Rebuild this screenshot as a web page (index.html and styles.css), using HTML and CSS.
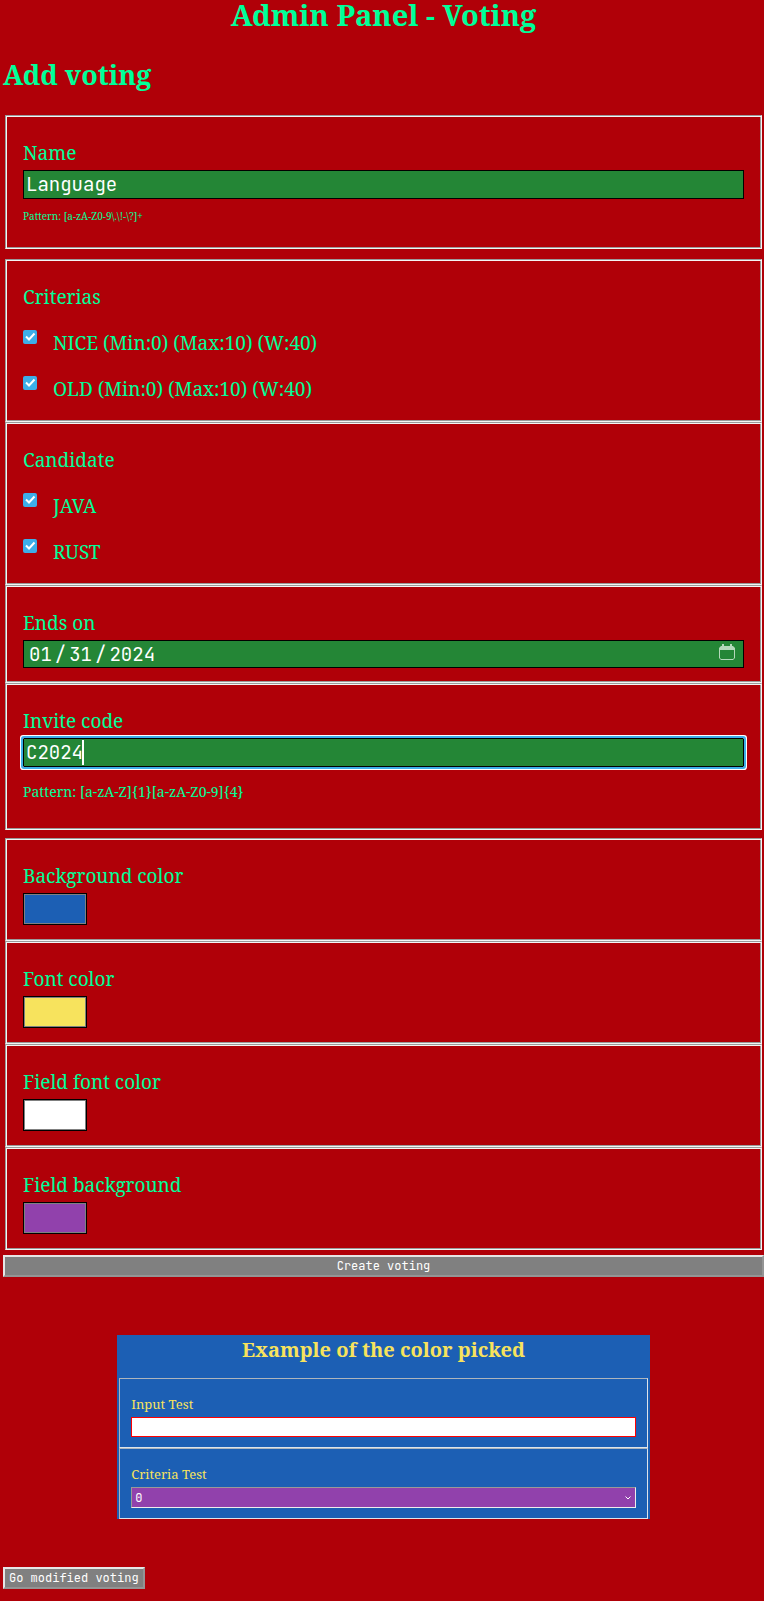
FILE: index.html
```html
<!DOCTYPE html>
<html lang="en">
<head>
<meta charset="utf-8">
<title>Admin Panel - Voting</title>
<meta name="viewport" content="width=device-width, initial-scale=1">
<link rel="stylesheet" href="styles.css">
</head>
<body>
<h1 class="title">Admin Panel - Voting</h1>
<main>
<h2 class="subtitle">Add voting</h2>
<form class="form">
  <div class="group">
    <fieldset class="box">
      <label class="label" for="name">Name</label>
      <input class="field" id="name" type="text" value="Language">
      <p class="hint hint-small">Pattern: [a-zA-Z0-9\.\!-\?]+</p>
    </fieldset>
  </div>
  <div class="group">
    <fieldset class="box">
      <span class="label">Criterias</span>
      <div class="option"><input class="check" type="checkbox" id="nice" checked><label for="nice">NICE (Min:0) (Max:10) (W:40)</label></div>
      <div class="option"><input class="check" type="checkbox" id="old" checked><label for="old">OLD (Min:0) (Max:10) (W:40)</label></div>
    </fieldset>
    <fieldset class="box">
      <span class="label">Candidate</span>
      <div class="option"><input class="check" type="checkbox" id="java" checked><label for="java">JAVA</label></div>
      <div class="option"><input class="check" type="checkbox" id="rust" checked><label for="rust">RUST</label></div>
    </fieldset>
    <fieldset class="box">
      <label class="label" for="ends">Ends on</label>
      <div class="wrap">
        <input class="field field-date" id="ends" type="date" value="2024-01-31">
        <svg class="calendar" viewBox="0 0 16 16" aria-hidden="true"><path d="M3 0h2v2h6V0h2v2h1l2 2v10l-2 2H2l-2-2V4l2-2h1zM1 6v8l1 1h12l1-1V6z" fill-rule="evenodd"/></svg>
      </div>
    </fieldset>
    <fieldset class="box">
      <label class="label" for="code">Invite code</label>
      <div class="wrap">
        <input class="field field-active" id="code" type="text" value="C2024">
        <span class="caret"></span>
      </div>
      <p class="hint">Pattern: [a-zA-Z]{1}[a-zA-Z0-9]{4}</p>
    </fieldset>
  </div>
  <div class="group">
    <fieldset class="box box-color">
      <label class="label" for="bg">Background color</label>
      <input class="color" id="bg" type="color" value="#1c5fb4">
    </fieldset>
    <fieldset class="box box-color">
      <label class="label" for="fc">Font color</label>
      <input class="color" id="fc" type="color" value="#f7e35d">
    </fieldset>
    <fieldset class="box box-color">
      <label class="label" for="ffc">Field font color</label>
      <input class="color" id="ffc" type="color" value="#ffffff">
    </fieldset>
    <fieldset class="box box-color">
      <label class="label" for="fb">Field background</label>
      <input class="color" id="fb" type="color" value="#9141ac">
    </fieldset>
  </div>
  <button class="button" type="button">Create voting</button>
</form>
<section class="preview">
  <h2 class="preview-title">Example of the color picked</h2>
  <fieldset class="preview-box">
    <label class="preview-label" for="it">Input Test</label>
    <input class="preview-input" id="it" type="text">
  </fieldset>
  <fieldset class="preview-box">
    <label class="preview-label" for="ct">Criteria Test</label>
    <div class="wrap">
      <select class="preview-select" id="ct"><option>0</option></select>
      <svg class="chevron" viewBox="0 0 6 4" aria-hidden="true"><path d="M.5.500L3 3 5.500.500"/></svg>
    </div>
  </fieldset>
</section>
<button class="button" type="button">Go modified voting</button>
</main>
</body>
</html>
```
FILE: styles.css
```css
* { box-sizing: border-box; }
body {
  margin: 0;
  padding: 0 0 13px 3px;
  background: #b00008;
  color: #00ff99;
  font-family: "Noto Serif", "DejaVu Serif", serif;
  font-size: 19px;
  line-height: 26px;
}
.title { margin: 0; font-size: 29px; line-height: 30px; text-align: center; }
.subtitle { margin: 25px 0 20px; font-size: 27px; line-height: 40px; }
.form { display: flex; flex-direction: column; }
.group { margin: 0 2px 8px; }
.group:first-of-type { margin-bottom: 10px; }
.group:last-of-type { margin-bottom: 5px; }
.box {
  min-width: 0;
  margin: 0;
  padding: 24px 17px 14px;
  border: 1px solid;
  border-color: #9a9a9a #f4f4f4 #f4f4f4 #9a9a9a;
  box-shadow: inset 1px 1px 0 #f4f4f4, inset -1px -1px 0 #9a9a9a;
}
.box-color { padding-bottom: 15px; }
.label { display: block; margin-bottom: 4px; }
.wrap { position: relative; font: 19px "JetBrains Mono", "DejaVu Sans Mono", monospace; }
.field {
  display: block;
  width: 100%;
  height: 29px;
  padding: 1px 2px;
  border: 1px solid #000;
  border-radius: 0;
  background: #248636;
  color: #fff;
  font: 19px "JetBrains Mono", "DejaVu Sans Mono", monospace;
}
.field-date { height: 28px; padding-left: 4px; }
.field-date::-webkit-datetime-edit-text { padding: 0 2px; }
.field-date::-webkit-calendar-picker-indicator { opacity: 0; }
.field-active { border-radius: 1px; outline: 2px solid #3daee9; box-shadow: 0 0 0 3px #fff; }
.caret { position: absolute; top: 2px; left: calc(5ch + 2px); width: 2px; height: 25px; background: #fff; }
.calendar { position: absolute; top: 4px; right: 9px; width: 16px; height: 16px; fill: #b5d8bb; }
.hint { margin: 15px 0 13px; font-size: 14px; line-height: 20px; }
.hint-small { margin: 10px 0; font-size: 10px; line-height: 15px; }
.option { display: flex; align-items: flex-start; gap: 16px; padding-top: 20px; }
.label + .option { padding-top: 16px; }
.option:last-child { padding-bottom: 5px; }
.check {
  appearance: none;
  width: 14px;
  height: 14px;
  margin: 0;
  border-radius: 2px;
  background: #3daee9 url("data:image/svg+xml,%3Csvg xmlns='http://www.w3.org/2000/svg' viewBox='0 0 14 14'%3E%3Cpath d='M3 6.500L6 9.500L11.500 3.500' fill='none' stroke='white' stroke-width='2'/%3E%3C/svg%3E");
}
.color { display: block; width: 64px; height: 32px; padding: 0; border: 1px solid #000; background: #808080; }
.color::-webkit-color-swatch-wrapper { padding: 0; }
.color::-webkit-color-swatch { border: 1px solid #808080; border-radius: 0; }
.button {
  display: block;
  height: 22px;
  padding: 0 4px;
  border: 2px solid;
  border-color: #e6e6e6 #949494 #949494 #e6e6e6;
  background: #808080;
  color: #fff;
  font: 12px "JetBrains Mono", "DejaVu Sans Mono", monospace;
}
.preview { width: 70%; margin: 58px auto 48px; padding: 0 2px; background: #1c5fb4; color: #f7e35d; }
.preview-title { margin: 0 0 13px; font-size: 20px; line-height: 30px; text-align: center; }
.preview-box { min-width: 0; margin: 0; padding: 16px 11px 10px; border: 1px solid; border-color: #adb5bd #dde3ea #dde3ea #adb5bd; }
.preview-label { display: block; margin-bottom: 4px; font-size: 13px; line-height: 18px; }
.preview-input { display: block; width: 100%; height: 20px; border: 1px solid #f00; background: #fff; }
.preview-select {
  appearance: none;
  display: block;
  width: 100%;
  height: 21px;
  padding: 0 3px;
  border: 1px solid;
  border-color: #999 #eee #eee #999;
  border-radius: 0;
  background: #9141ac;
  color: #fff;
  font: 12px "JetBrains Mono", "DejaVu Sans Mono", monospace;
}
.chevron { position: absolute; top: 9px; right: 5px; width: 6px; height: 4px; fill: none; stroke: #fff; }
```
